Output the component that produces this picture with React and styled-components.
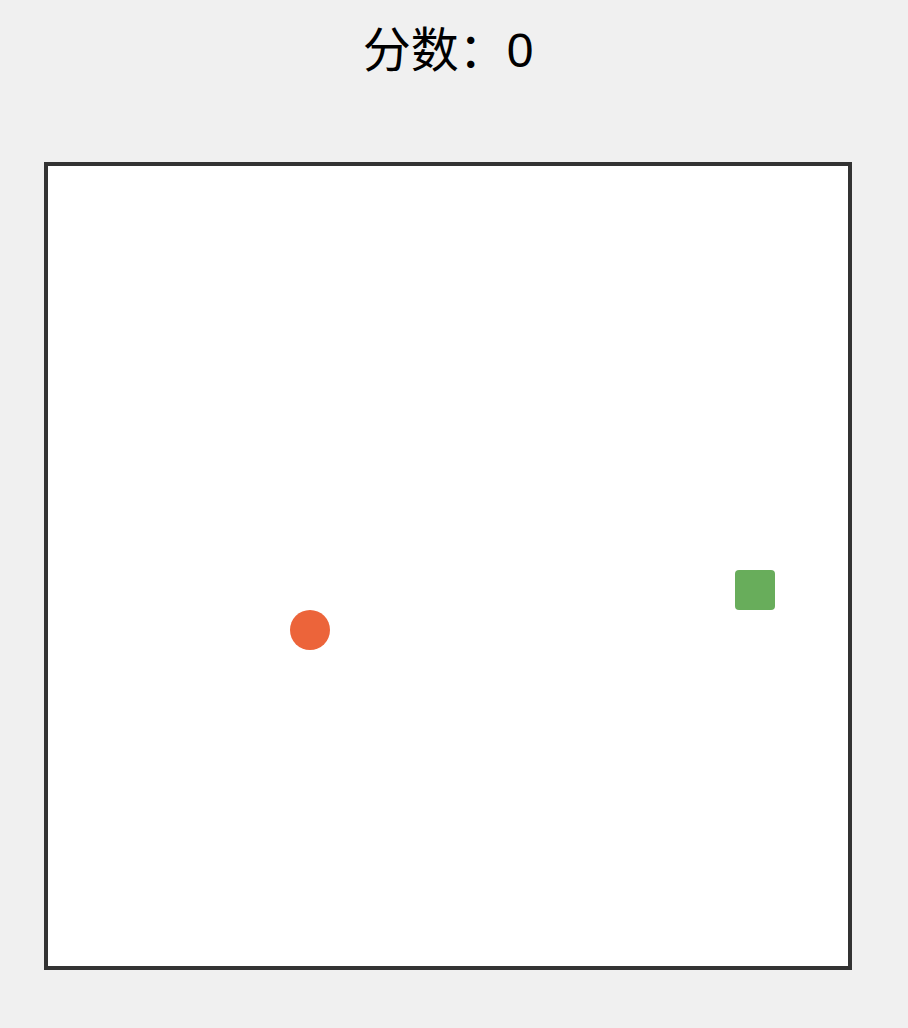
import React from "react";
import styled, { createGlobalStyle } from "styled-components";

const GlobalStyle = createGlobalStyle`
  html, body {
    margin: 0;
    padding: 0;
    background: #f0f0f0;
    font-family: "Liberation Sans", "Noto Sans CJK SC", sans-serif;
  }
`;

const Page = styled.div`
  width: 896px;
  display: flex;
  flex-direction: column;
  align-items: center;
  padding-top: 16px;
`;

const Score = styled.div`
  font-size: 48px;
  line-height: 70px;
  color: #000;
  font-family: "Liberation Sans", "Noto Sans CJK SC", sans-serif;
`;

const Board = styled.div`
  position: relative;
  margin-top: 76px;
  width: 800px;
  height: 800px;
  background: #fff;
  border: 4px solid #333;
`;

const Food = styled.div`
  position: absolute;
  width: 40px;
  height: 40px;
  border-radius: 50%;
  background: #ec643a;
`;

const SnakeCell = styled.div`
  position: absolute;
  width: 40px;
  height: 40px;
  border-radius: 4px;
  background: #68ad5b;
`;

export default function App() {
  return (
    <>
      <GlobalStyle />
      <Page>
        <Score>分数：0</Score>
        <Board>
          <SnakeCell style={{ left: 687, top: 404 }} />
          <Food style={{ left: 242, top: 444 }} />
        </Board>
      </Page>
    </>
  );
}
